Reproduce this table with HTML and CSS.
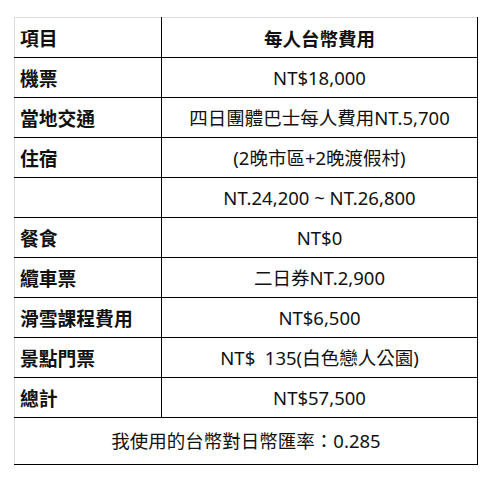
FILE: index.html
```html
<!DOCTYPE html>
<html lang="zh-Hant">
<head>
<meta charset="utf-8">
<link rel="stylesheet" href="styles.css">
</head>
<body>
<table class="cost">
  <tr class="head"><td class="label">項目</td><td class="value strong">每人台幣費用</td></tr>
  <tr><td class="label">機票</td><td class="value">NT$18,000</td></tr>
  <tr><td class="label">當地交通</td><td class="value">四日團體巴士每人費用NT.5,700</td></tr>
  <tr><td class="label">住宿</td><td class="value">(2晚市區+2晚渡假村)</td></tr>
  <tr><td class="label"></td><td class="value">NT.24,200 ~ NT.26,800</td></tr>
  <tr><td class="label">餐食</td><td class="value">NT$0</td></tr>
  <tr><td class="label">纜車票</td><td class="value">二日券NT.2,900</td></tr>
  <tr><td class="label">滑雪課程費用</td><td class="value">NT$6,500</td></tr>
  <tr><td class="label">景點門票</td><td class="value">NT$&nbsp; 135(白色戀人公園)</td></tr>
  <tr><td class="label">總計</td><td class="value">NT$57,500</td></tr>
  <tr class="foot"><td class="note" colspan="2">我使用的台幣對日幣匯率：0.285</td></tr>
</table>
</body>
</html>
```
FILE: styles.css
```css
html, body {
  margin: 0;
  padding: 0;
  background: #fff;
}
body {
  font-family: "Noto Sans", "Noto Sans CJK TC", sans-serif;
  color: #111;
  font-size: 18.5px;
}
.cost {
  border-collapse: collapse;
  margin: 17px 0 0 14px;
  width: 464px;
  table-layout: fixed;
}
.cost td {
  border: 1px solid #000;
  height: 39px;
  padding: 0;
  line-height: 22px;
  vertical-align: middle;
}
.cost .head td {
  border-top-color: #dcdcdc;
}
.cost td.label,
.cost td.note {
  border-left-color: #dcdcdc;
}
.label {
  width: 141px;
  padding-left: 5px !important;
  font-weight: 700;
  font-size: 18.8px;
  font-family: "Noto Sans CJK TC", sans-serif;
}
.value {
  text-align: center;
}
.strong {
  font-weight: 700;
  font-family: "Noto Sans CJK TC", sans-serif;
}
.foot td {
  height: 46px;
  text-align: center;
}
```
